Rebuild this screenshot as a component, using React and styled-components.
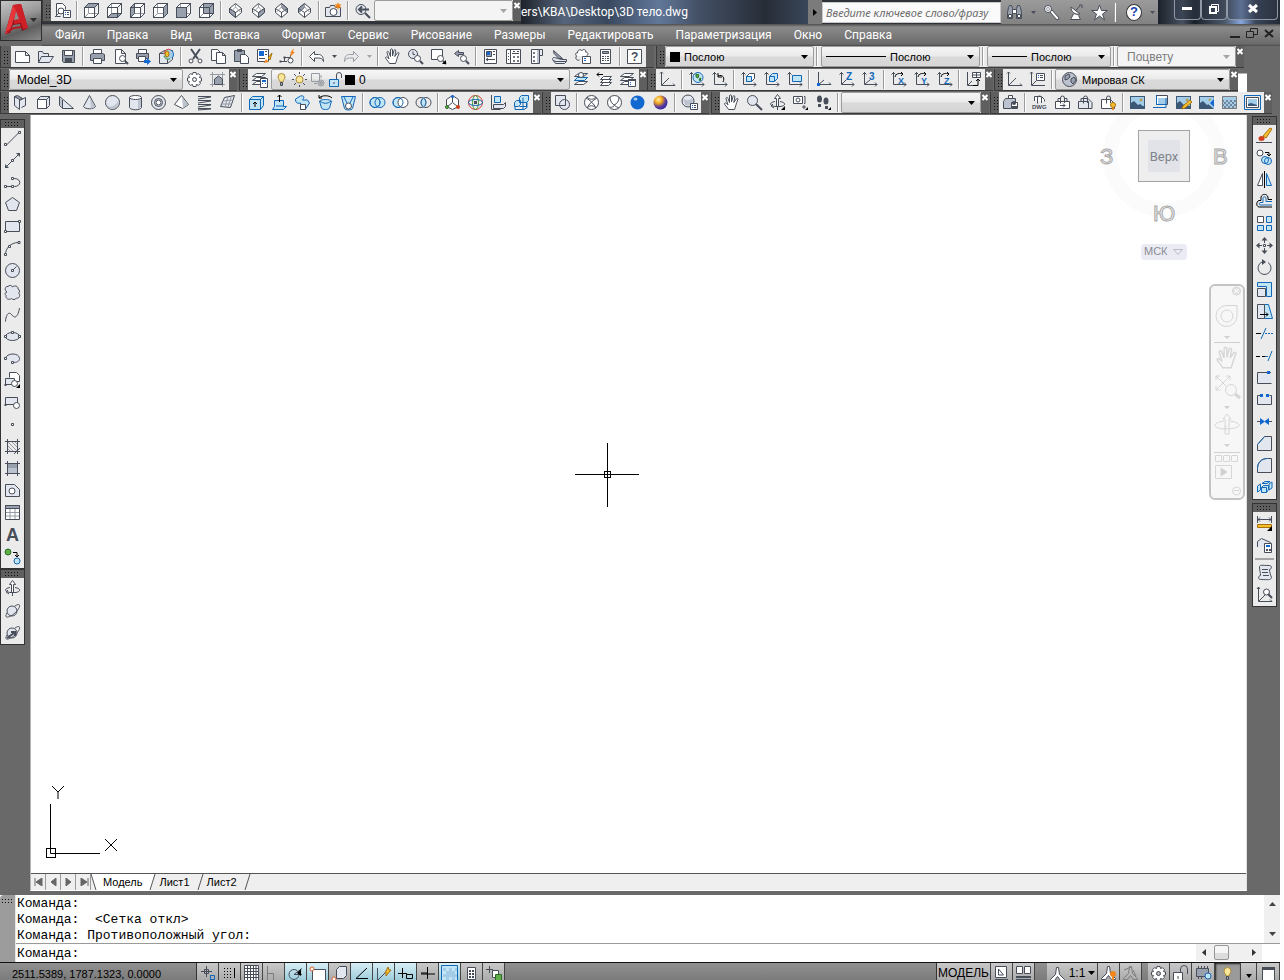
import React from 'react'
import styled, { createGlobalStyle, css } from 'styled-components'

const GlobalStyle = createGlobalStyle`
  * { box-sizing: border-box; }
  body {
    margin: 0;
    background: #fff;
    font-family: 'Liberation Sans', Arial, sans-serif;
    font-size: 12px;
  }
  button, select, input { font: inherit; }
`

/* ---------- icons ---------- */

const ink = '#474d59'
const blue = '#1268b8'

const tones = {
  k: { stroke: ink },
  K: { stroke: ink, strokeWidth: 2 },
  g: { stroke: ink, fill: '#e2e6ee' },
  w: { stroke: ink, fill: '#fff' },
  a: { stroke: ink, fill: '#98a0ae' },
  h: { fill: '#bcc3ce' },
  f: { fill: ink },
  x: { fill: '#000' },
  X: { stroke: '#000' },
  b: { stroke: blue },
  s: { stroke: blue, fill: '#c2e5f6' },
  n: { fill: '#1268d0' },
  l: { stroke: '#969ba3' },
  L: { fill: '#a0a4aa' },
  d: { stroke: '#7c7c7c' },
  o: { fill: '#f0861c' },
  O: { stroke: '#e0602a', fill: '#fff' },
  y: { stroke: '#a98a35', fill: '#fbe79a' },
  Y: { stroke: '#a8700c', fill: '#f6bf2c' },
  e: { fill: '#5fae4a', stroke: '#2b6d25' },
  E: { stroke: '#3f9a35' },
  r: { stroke: '#d03a34' },
  R: { fill: '#d0401e' },
  p: { fill: '#3d5877' },
  P: { fill: '#a3cce8' },
  q: { fill: '#71869b' },
}

const circle = (x, y, r) => `M${x - r} ${y}a${r} ${r} 0 1 0 ${2 * r} 0a${r} ${r} 0 1 0 ${-2 * r} 0z`
const ellipse = (x, y, rx, ry) => `M${x - rx} ${y}a${rx} ${ry} 0 1 0 ${2 * rx} 0a${rx} ${ry} 0 1 0 ${-2 * rx} 0z`
const box = (x, y, w, h) => `M${x} ${y}h${w}v${h}h${-w}z`
const dots = (...points) => points.map(([x, y]) => box(x - 1, y - 1, 2, 2)).join('')

const cube = shade => [
  ['w', `${box(1.5, 5.5, 10, 10)}M1.5 5.5l4-4h10l-4 4M15.5 1.5v10l-4 4`],
  ['l', 'M5.5 1.5v10h10M5.5 11.5l-4 4'],
  ['a', shade],
  ['k', `${box(1.5, 5.5, 10, 10)}M1.5 5.5l4-4h10l-4 4zM15.5 1.5v10l-4 4`],
]
const iso = shade => [
  ['w', 'M8.5 1.5l6 5v4l-6 5-6-5v-4z'],
  ['a', shade],
  ['k', 'M2.5 6.5l6 4 6-4M8.5 10.5v5'],
  ['l', 'M8.5 2v3l-5 5M8.5 5l5 5'],
]
const axes = ['k', 'M3.5 1v12.5H16M1.5 3.5l2-2 2 2M14 11.5l2 2-2 2']
const page = ['w', 'M3.5 1.5h6l4 4v10h-10zM9.5 1.5v4h4']
const lens = [['w', circle(10.5, 10.5, 3)], ['K', 'M13 13l3 3']]
const picture = [
  ['p', box(1, 2, 15, 13)],
  ['P', box(2, 3, 13, 9)],
  ['p', 'M2 14V9l3-2 4 4 2-1 4 3v1z'],
  ['y', circle(12, 6, 1)],
]
const layers = [['w', 'M5.5 2.5h9l-4 3h-9zM5.5 6.5h9l-4 3h-9zM5.5 10.5h9l-4 3h-9z']]
const clip = ['k', 'M6.5 9.5V4a2 2 0 0 1 4 0v5']
const gear = circle(8.5, 8.5, 2) + 'M7 1.5h3l.5 2 2-.8 2 2-1 1.8 2 .5v3l-2 .5 1 1.8-2 2-2-.8-.5 2h-3l-.5-2-2 .8-2-2 1-1.8-2-.5v-3l2-.5-1-1.8 2-2 2 .8z'
const hand = 'M5.5 15.5C4 12.5 1.5 11 1.5 9.5c1-1.5 2.5.5 3.5 1.5L3 4.5c0-1.5 1.5-1.5 2 0l1.5 4L6.5 2c0-1.5 2-1.5 2 0v6l1.5-5.5c.5-1.5 2-1 1.8.5L10.8 8.5l2.5-3.5c1-1.2 2.2-.2 1.5 1-2 4-2 6.5-3.3 9.5z'
const rotArrow = ['X', 'M5 6c1-4 5-4 8-3M11 1l2 2-2 2']
const anno = 'M7.5 1.5h2l1 7 5 5v1h-4l-3-4-3 4h-4v-1l5-5z'
const orbit = [
  ['w', 'M8.5 .5l3 4h-2v8h-2v-8h-2z'],
  ['k', 'M6 7.5c-6 1-6 4 0 5h6c5-1 5-4-1-5M4 10l-2 2 3 2M8.5 12v4'],
]
const orbitBall = [['g', circle(8, 9, 5)], ['k', 'M11 4c6-4 6 1 1 6s-13 8-9 1']]

const icons = {
  viewList: [['w', 'M2.5 14.5v-13h6l3 3v3M2.5 14.5h4'], ['k', circle(7, 9, 3) + 'M5 11l-4 4'], ['w', box(9.5, 8.5, 7, 7)], ['n', 'M11 10h1v1h-1zM11 12h1v1h-1z'], ['k', 'M13 10.5h2M13 12.5h2']],
  top: cube('M1.5 5.5l4-4h10l-4 4z'),
  bottom: cube('M1.5 15.5l4-4h10l-4 4z'),
  left: cube('M1.5 5.5l4-4v10l-4 4z'),
  right: cube('M15.5 1.5v10l-4 4v-10z'),
  front: cube(box(1.5, 5.5, 10, 10)),
  back: cube(box(5.5, 1.5, 10, 10)),
  isoSW: iso('M2.5 6.5l6 4v5l-6-5z'),
  isoSE: iso('M8.5 10.5l6-4v4l-6 5z'),
  isoNE: iso('M8.5 1.5l6 5v4l-6-5z'),
  isoNW: iso('M8.5 1.5v4l-6 5v-4z'),
  camera: [['g', 'M.5 5.5h4l1-2h4l1 2h5v9h-15z'], ['w', circle(8.5, 10, 3.5)], ['o', 'M13 0l1 2.5 2.5-.5-1.5 2 1.5 2-2.5-.5-1 2.5-1-2.5-2.5.5 1.5-2-1.5-2 2.5.5z']],
  prevView: [['g', circle(7, 7.5, 5)], ['K', 'M11 11l5 5M5 7.5h10M8 4.5l-3 3 3 3']],

  newFile: [['w', 'M1.5 3.5h10l4 4v7h-14zM11.5 3.5v4h4']],
  open: [['g', 'M1.5 14.5v-11h4l1 2h5v3M1.5 14.5l3-6h12l-4 6z']],
  save: [['a', 'M2.5 2.5h12v12h-11l-1-1z'], ['w', box(4.5, 2.5, 8, 5)], ['f', box(5, 10, 7, 4)]],
  print: [['w', box(4.5, 1.5, 8, 4)], ['a', 'M1.5 6.5l2-1h10l2 1v6h-14z'], ['w', box(4.5, 10.5, 8, 5)]],
  preview: [page, ...lens],
  publish: [['w', box(3.5, 1.5, 8, 4)], ['a', box(1.5, 5.5, 12, 5)], ['w', box(3.5, 8.5, 7, 5)], ['n', 'M9 12h3v-2l4 3.5-4 3.5v-2H9z']],
  dwf: [['g', 'M1.5 5.5l5-3h8v9l-5 4h-8zM1.5 5.5h8v10'], ['P', circle(10.5, 6.5, 5)], ['r', 'M6 6a4.5 4.5 0 0 1 7-4'], ['Y', ellipse(9, 6, 2, 3)], ['E', 'M6 8a5 5 0 0 0 6 3'], ['b', 'M13 2a5 5 0 0 1 1 8']],
  cut: [['K', 'M4 1l7 10M13 1L6 11'], ['w', circle(4, 13, 2) + circle(13, 13, 2)]],
  copy: [['w', 'M1.5 1.5h6l3 3v8h-9z'], ['w', 'M6.5 4.5h6l3 3v8h-9zM12.5 4.5v3h3']],
  paste: [['a', box(1.5, 2.5, 10, 11)], ['f', box(4, 1, 5, 3)], ['w', 'M7.5 6.5h5l3 3v6h-8z']],
  match: [['w', box(1.5, 1.5, 11, 12)], ['n', box(3, 3, 5, 5)], ['k', 'M9 3.5h2M9 6.5h2M3 10.5h6'], ['o', 'M8 15l2-4 3 3z'], ['Y', 'M12 10l4-5-2 7z']],
  blockEdit: [['k', 'M1 13.5h7M5.5 13V9.5h6V6.5'], ['w', circle(11.5, 12.5, 2.5)], ['o', 'M11 5l4-5-1 4h2l-5 5 1-4z'], ['f', dots([1.5, 13.5], [5.5, 9.5])]],
  undo: [['w', 'M1.5 8.5l5-5v3h4c3 0 5 2 5 7-1-3-3-3.5-5-3.5h-4v3.5z']],
  redo: [['l', 'M15.5 8.5l-5-5v3h-4c-3 0-5 2-5 7 1-3 3-3.5 5-3.5h4v3.5z']],
  arrow: [['f', 'M6 7h5l-2.5 3z']],
  arrowOff: [['L', 'M6 7h5l-2.5 3z']],
  pan: [['w', hand]],
  zoomRT: [['g', circle(6, 6, 4.5)], ['k', 'M6 3.5v3h2'], ...lens],
  zoomWin: [['w', box(1.5, 1.5, 11, 10)], ...lens, ['x', 'M16 12v4h-4z']],
  zoomPrev: [['a', 'M1.5 5.5l4-3v2h5v2h-5v2z'], ...lens],
  props: [['w', box(2.5, 1.5, 12, 14)], ['a', box(4.5, 3.5, 5, 5)], ['n', box(5, 4, 3, 3)], ['k', 'M11 3.5h2M11 6.5h2M4 11.5h9M6 10l-2 1.5 2 1.5']],
  design: [['w', box(1.5, 1.5, 14, 14)], ['k', 'M5.5 1.5v14M3 5.5h1M3 8.5h1M3 11.5h1M8.5 8.5h1v1h-1zM12.5 8.5h1v1h-1zM8.5 12.5h1v1h-1zM12.5 12.5h1v1h-1zM12 3.5h2M8 3.5h2M7 5.5h7']],
  palettes: [['w', box(3.5, 1.5, 8, 14)], ['h', 'M9 2h2v13H9z'], ['k', 'M11.5 1.5h3v6h-3M5.5 4.5h1v1h-1zM5.5 8.5h1v1h-1zM5.5 12.5h1v1h-1z']],
  sheets: [['g', 'M1.5 11.5c0-2 1-2 2-2l7 2h5v2l-2 2h-9z'], ['a', 'M2.5 2.5l9 8H8l-5-5z'], ['k', 'M2 12.5l3 1h10']],
  markup: [['w', 'M2.5 8c-2-2 0-4 1-3 0-4 4-4 4-2 2-3 5-1 4 1 3 0 3 3 1 4'], ['k', 'M2.5 8c-2 3 1 5 3 4'], ['w', box(8.5, 8.5, 8, 7)], ['n', 'M10 10h2v1h-2zM10 12h2v1h-2z']],
  calc: [['w', box(3.5, 1.5, 10, 14)], ['a', box(5.5, 3.5, 6, 2)], ['f', 'M5 8h2v1H5zM8 8h1v1H8zM10 8h2v1h-2zM5 10h2v1H5zM8 10h1v1H8zM10 10h2v1h-2zM5 12h2v1H5zM8 12h1v1H8zM10 12h2v1h-2z']],
  help: [['w', box(1.5, 1.5, 14, 14)], ['t', '?', 5, 13, 12, ink]],

  gear: [['w', gear]],
  workspaceSave: [['l', 'M3.5 1v15M13.5 1v15M1 3.5h15M1 13.5h15'], ['a', 'M5.5 13.5V8l4-3 4 3v5.5z']],
  layerProps: [...layers, ['w', box(9.5, 7.5, 7, 9)], ['n', 'M11 9h4v2h-4zM11 12h1v1h-1zM14 12h1v1h-1z']],
  layerCurrent: [...layers, ['s', 'M4.5 6.5h10l-3 3h-10z'], ['w', circle(8, 4, 2.5)]],
  layerPrev: [['w', 'M7.5 5.5h8l-3 3h-8zM7.5 8.5h8l-3 3h-8zM7.5 11.5h8l-3 3h-8z'], ['X', 'M1 3.5h6M3 1.5l-2 2 2 2']],
  layerState: [...layers, ['w', box(9.5, 8.5, 7, 7)], ['f', box(9, 8, 8, 2)], ['n', 'M11 11h1v1h-1zM11 13h1v1h-1z']],
  bulb: [['y', 'M5 6a3.5 3.5 0 0 1 7 0c0 2-2 3-2 5H7c0-2-2-3-2-5z'], ['a', box(7.5, 11.5, 2, 3)]],
  sun: [['y', circle(8.5, 8.5, 3.5)], ['k', 'M8.5 1v2M8.5 14v2M1 8.5h2M14 8.5h2M3 3l2 2M12 12l2 2M14 3l-2 2M5 12l-2 2']],
  vpFreeze: [['l', box(2.5, 2.5, 8, 8) + 'M12 4v3M5 12.5h3'], ['l', circle(12, 12, 3)], ['L', circle(12, 12, 2)]],
  unlock: [['s', box(2.5, 8.5, 9, 7)], ['k', 'M9.5 8V4a2.5 2.5 0 0 1 5 0v3M7 11v2']],

  polysolid: [['g', 'M2.5 2.5l5 2v11l-5-4zM7.5 6.5l6-3v8l-4 2'], ['a', 'M2.5 2.5l3-1 5 3-3 1z']],
  boxSolid: [['g', 'M2.5 5.5l3-3h9v9l-3 3h-9z'], ['w', 'M2.5 5.5h9v9h-9z'], ['k', 'M11.5 5.5l3-3']],
  wedge: [['g', 'M1.5 2.5l14 12h-11l-3-3z'], ['h', 'M2 4v7l2 3V6z'], ['k', 'M4.5 14V6']],
  cone: [['g', 'M8.5 1.5l6 11c-1 3-11 3-12 0z'], ['h', 'M9 4l5 8.5c-1 1-2 2-4 2z']],
  sphere: [['g', circle(8.5, 8.5, 7)], ['h', 'M3 11c3 3 8 2 11-4 1 8-8 11-11 4z']],
  cylinder: [['g', 'M2.5 3.5v10c1 3 11 3 12 0v-10'], ['h', 'M11 6l3-1v8l-3 2z'], ['w', ellipse(8.5, 3.5, 6, 2)]],
  torus: [['g', circle(8.5, 8.5, 7)], ['k', circle(8.5, 8.5, 4)], ['w', circle(8.5, 8.5, 2.5)]],
  pyramid: [['w', 'M8.5 1.5l7 9-6 4-8-4z'], ['h', 'M9 3l1 11 5-3.5z']],
  helix: [['k', 'M2 2.5h13M2 5l13-2M2 6.5h13M2 9l13-2M2 10.5h13M2 13l13-2M2 14.5h13M2 16l13-1']],
  planar: [['g', 'M5.5 3.5l10-2-4 12-10-1z'], ['l', 'M9 3L6 13M12.5 2L9 13M4 7l10-1M2.5 10h10']],
  extrude: [['s', 'M1.5 5.5l3-3h11v9l-3 4h-11z'], ['b', 'M1.5 5.5h11v10M12.5 5.5l3-3'], ['X', 'M7 13V8M5 10l2-2 2 2']],
  presspull: [['s', 'M3.5 6.5h9v6h3l-3 3h-11l2-3z'], ['b', 'M5 12h8'], ['X', 'M8.5 8V1M6.5 3l2-2 2 2']],
  sweep: [['s', 'M1.5 5l5-3c4-1 4 2 2 4h5l2 3-4 6h-5v-6c-4 1-5-1-5-4z'], ['w', box(6.5, 10.5, 5, 5)]],
  revolve: [['s', 'M2.5 7c2-2 10-2 12 0l-2 7c-1 2-7 2-8 0z'], ['b', 'M3 7c3 3 8 3 11 0'], ['X', 'M2 4c3-3 10-3 13 0M2 1v3h3']],
  loft: [['s', 'M1.5 2.5h14l-3 12c-1 2-7 2-8 0z'], ['w', circle(8.5, 12, 3)], ['b', 'M4 3l3 6M13 3l-3 6']],
  union: [['s', circle(6, 8.5, 5) + circle(11, 8.5, 5)], ['b', circle(6, 8.5, 5)]],
  subtract: [['s', circle(6, 8.5, 5)], ['w', circle(11, 8.5, 5)], ['b', circle(6, 8.5, 5)]],
  intersect: [['k', circle(6, 8.5, 5) + circle(11, 8.5, 5)], ['s', 'M8.5 4c3 2 3 7 0 9-3-2-3-7 0-9z']],
  gizmo3d: [['w', 'M8.5 1.5l6 4v7l-6 3-6-3v-7z'], ['k', 'M8.5 2v6M8.5 8.5l-5 4M8.5 8.5l5 4'], ['n', circle(8.5, 2.5, 1.5)], ['e', circle(3, 13, 1.5)], ['R', circle(14, 13, 2)]],
  gizmoRot: [['r', circle(8.5, 8.5, 7)], ['E', ellipse(8.5, 8.5, 3, 7)], ['b', ellipse(8.5, 8.5, 7, 3)], ['f', box(7, 7, 3, 3)]],
  alignUcs: [['s', box(4.5, 2.5, 6, 6)], ['k', 'M1.5 1v14.5h9'], ['g', 'M3.5 10.5h10l2-2v4l-2 2h-10z']],
  array3d: [['s', 'M1.5 8.5l2-2h4v4l-2 2h-4zM6.5 3.5l2-2h7v5l-2 2h-7z'], ['b', 'M2 12v3.5h9l3-2v-5M6.5 8.5h7v5M10 3.5v12M6.5 12.5h7']],

  wire2d: [['g', box(1.5, 1.5, 10, 10)], ['g', circle(10.5, 10.5, 5)], ['k', 'M11.5 6v5.5H6']],
  wire3d: [['w', circle(8.5, 8.5, 7)], ['k', 'M3 4c4 2 8 6 10 10M14 4c-4 2-8 6-10 10M4 3c3 3 6 3 9 0M4 14c3-3 6-3 9 0']],
  hidden: [['w', circle(8.5, 8.5, 7)], ['k', 'M4 3c0 4 2 8 9 11M13 3c0 4-2 7-5 8M4 13c1 1 2 0 4-1']],
  realistic: [['n', circle(8.5, 8.5, 7)], ['P', ellipse(6.5, 5, 2, 1.5)]],
  styleManager: [['g', circle(7, 7, 6)], ['h', 'M2 4c3 3 6 3 9 0 3 5-2 9-7 7z'], ['w', box(9.5, 9.5, 7, 6)], ['n', 'M11 11h1v1h-1zM11 13h1v1h-1z'], ['k', 'M13 11.5h2M13 13.5h2']],
  zoom: [['K', 'M10 10l6 6'], ['g', circle(6.5, 6.5, 5)]],
  orbit,
  orbitMenu: [...orbit, ['x', 'M16 12v4h-4z']],
  cameraMove: [['w', box(1.5, 2.5, 9, 7)], ['k', circle(6, 6, 2) + 'M12 2.5h1v7h-1M12 11v4M10 13h4'], ['x', 'M16 13v3h-3z']],
  walk: [['f', ellipse(4.5, 5, 2.5, 3.5) + box(3, 10, 3, 3) + ellipse(11, 7, 2.5, 3.5) + box(10, 12, 3, 3)], ['x', 'M16 13v3h-3z']],

  ucs: [['k', 'M2.5 1v13.5H16M3 14l7-7M14 12.5l2 2M1 2.5l1.5-1.5 1.5 1.5']],
  ucsWorld: [axes, ['s', circle(10, 6.5, 5)], ['e', 'M8 3l3 1-1 3-2-1zM11 8l2-1-1 3z']],
  ucsPrev: [axes, ['X', 'M7 5c5-2 7 2 5 6M7 2v4h4']],
  ucsFace: [axes, ['w', 'M6.5 5.5l3-3h5v5l-3 3h-5z'], ['s', box(6.5, 5.5, 5, 5)]],
  ucsObject: [axes, ['s', 'M6.5 5.5l3-3h5v5l-3 3h-5z'], ['b', 'M6.5 5.5h5v5']],
  ucsView: [axes, ['s', box(6.5, 4.5, 9, 6)]],
  ucsOrigin: [['k', 'M3.5 1v12.5H16M3 14l6-5M14 11.5l2 2'], ['n', box(2, 12, 3, 3)]],
  ucsZ: [axes, ['k', 'M4 13l4-4'], ['t', 'Z', 8, 9, 10, blue]],
  ucs3: [axes, ['k', 'M4 13l5-4'], ['t', '3', 8, 9, 10, blue]],
  rotX: [axes, rotArrow, ['t', 'X', 8, 13, 9, blue]],
  rotY: [axes, rotArrow, ['t', 'Y', 8, 13, 9, blue]],
  rotZ: [axes, rotArrow, ['t', 'Z', 8, 13, 9, blue]],
  ucsApply: [['k', 'M2.5 1v13.5H8M3 14l4-4'], ['w', box(7.5, 1.5, 8, 5)], ['k', 'M11.5 1.5v5M7.5 4h8'], ['X', 'M8 14.5h5V8M11 10l2-2 2 2']],
  ucsNamed: [['k', 'M2.5 1v13.5H16M3 14l4-4M1 2.5l1.5-1.5 1.5 1.5'], ['w', box(7.5, 2.5, 8, 7)], ['n', 'M9 4h1v1H9zM9 6h1v1H9z'], ['k', 'M11 4.5h3M11 6.5h3']],
  globe: [['h', circle(8.5, 8.5, 7)], ['a', 'M4 5l4-2 1 3-2 2-3 1zM10 8l3-2 2 3-3 4-2-2z'], ['k', circle(8.5, 8.5, 7)]],

  attach: [['h', 'M2 7l2-2h9v5H9v5H2z'], ['k', 'M9 14.5h-7.5v-7l2-3h10v4'], ['w', box(6.5, 1.5, 4, 3)], ['w', box(9.5, 8.5, 6, 6)], ['f', circle(12, 9, 2) + box(10, 12, 5, 3)]],
  dwg: [['w', 'M3.5 7V2.5h7l3 3v2'], clip, ['t', 'DWG', 1, 15, 6, ink]],
  xclip: [['w', box(1.5, 7.5, 14, 7)], ['k', 'M4 7V4.5h2M11 4.5h2V7'], clip, ['k', 'M6 11.5h5M9 9.5l2 2-2 2']],
  underlay: [['g', 'M1.5 14.5v-7h10v7zM4 7V4.5h7l4 4v6h-4'], clip],
  snapLay: [['w', 'M1.5 14.5v-9h9l4 4v5z'], clip, ['Y', circle(13, 11, 2.5)], ['o', box(12, 14, 2, 2)]],
  picAttach: picture,
  picClip: [['w', box(4.5, 1.5, 11, 9)], ['P', box(6, 4, 9, 6)], ['b', 'M4.5 1v9.5H14M1 13.5h13V4']],
  picAdjust: [...picture, ['Y', 'M7 15l1-3 7-6 2 2-7 6z']],
  picQuality: [...picture, ['P', 'M9 9l7-6v12z'], ['n', 'M12 9l4-4v8z']],
  picTransp: [['P', box(1, 2, 15, 13)], ['q', 'M1 6h2v2H1zM5 6h2v2H5zM9 6h2v2H9zM13 6h2v2h-2zM3 8h2v2H3zM7 8h2v2H7zM11 8h2v2h-2zM1 10h2v2H1zM5 10h2v2H5zM9 10h2v2H9zM13 10h2v2h-2zM3 12h2v2H3zM7 12h2v2H7zM11 12h2v2h-2z'], ['d', box(1.5, 2.5, 14, 12)]],
  picFrame: [['b', box(.5, 1.5, 16, 14)], ['w', box(2.5, 3.5, 12, 10)], ['P', box(4, 5, 9, 7)], ['p', 'M4 12v-2l3-1 6 2v1z']],

  line: [['k', 'M2.5 15l12-12'], ['w', box(.5, 13.5, 2, 2) + box(14.5, 1.5, 2, 2)]],
  xline: [['k', 'M2 15L15 2'], ['f', 'M1 16v-4l4 4zM16 1v4l-4-4z'], ['w', box(7.5, 7.5, 2, 2)]],
  pline: [['k', 'M1.5 12.5h9c7 0 7-8 0-8h-1'], ['w', dots([1.5, 12.5], [8.5, 12.5], [8.5, 4.5])]],
  polygon: [['g', 'M8.5 1.5l7 5-3 8h-8l-3-8z']],
  rect: [['g', box(1.5, 3.5, 14, 10)], ['w', dots([1.5, 13.5], [15.5, 3.5])]],
  arc: [['k', 'M1.5 14.5c0-6 5-12 13-12'], ['w', dots([1.5, 14.5], [5.5, 6.5], [15, 2.5])]],
  circle: [['g', circle(8.5, 8.5, 7)], ['k', 'M8.5 8.5l4-4'], ['w', dots([8.5, 8.5])]],
  cloud: [['g', 'M3 8C0 6 1 2 4 2.5 5 1 8 1 8.500 3c2-2 6-1 5.500 2 2 1 2 3 .5 4 2.500 2 .5 6-2 5-1 2-4 2-5 .5-3 2-6 0-5.500-3C.5 11 1 8 3 8z']],
  spline: [['k', 'M1.5 15.5C2 8 5 5 8 9s6 2 7.5-7']],
  ellipse: [['g', ellipse(8.5, 8.5, 7, 4)], ['w', dots([1.5, 8.5], [15.5, 8.5], [8.5, 4.5])]],
  ellArc: [['g', 'M1.5 8.5c1-6 14-6 14 0 0 3-3 4-6 4'], ['w', dots([1.5, 8.5], [8.5, 12.5])]],
  insert: [['w', 'M5.5 5.5v-5h7l3 3v6h-3'], ['g', box(1.5, 6.5, 9, 6)], ['w', circle(10.5, 11.5, 3)], ['f', dots([1.5, 13])], ['x', 'M16 12v4h-4z']],
  block: [['g', box(1.5, 3.5, 12, 7)], ['w', circle(12.5, 11.5, 3)], ['f', dots([1.5, 11])]],
  point: [['w', box(7.5, 7.5, 2, 2)]],
  hatch: [['k', 'M3.5 1v15M13.5 1v15M1 3.5h15M1 13.5h15'], ['l', 'M4 8l5 5M4 4l9 9M8 4l5 5M4 11l2 2M11 4l2 2'], ['k', 'M10 16l6-6']],
  gradient: [['a', box(3.5, 3.5, 10, 10)], ['h', box(4, 8, 9, 5)], ['k', 'M3.5 1v15M13.5 1v15M1 3.5h15M1 13.5h15']],
  region: [['g', 'M1.5 14.5v-12h9l5 5v7z'], ['w', circle(8, 9, 3)]],
  table: [['w', box(1.5, 1.5, 14, 14)], ['a', box(1.5, 1.5, 14, 3)], ['l', 'M6 5v10M11 5v10M2 8.5h13M2 12h13']],
  text: [['t', 'A', 2, 15, 18, ink]],
  addSel: [['e', circle(4, 4, 3)], ['s', circle(13, 13, 3)], ['X', 'M9 4.5h4v4M11 7l2 2 2-2']],
  freeOrbit: orbitBall,
  contOrbit: [...orbitBall, ['K', 'M3 14l7-5M7 8h4v4']],

  erase: [['Y', 'M7 9l7-8 2 1-6 9z'], ['R', ellipse(5.5, 11.5, 3, 2.5)], ['k', 'M0 15.5h16']],
  copyObj: [['w', circle(4, 4, 3)], ['s', circle(9, 11, 3.5) + circle(12, 12, 3.5)], ['X', 'M9 3.5h4v3M11 5l2 2 2-2']],
  mirror: [['w', 'M6.5 2.5v12h-5z'], ['s', 'M10.5 2.5v12h5z'], ['X', 'M8.5 0v17']],
  offset: [['X', 'M16 6.5h-4V4c-1-3.5-6-3.5-7 0v3.5H3c-3 1-3 6 0 6.5h13'], ['b', 'M16 8.5h-6v-4c-1-1-2-1-3 0v5H4c-1 1-1 2 0 2.500h12']],
  array: [['w', box(1.5, 1.5, 6, 6)], ['s', box(10.5, 1.5, 5, 6) + box(1.5, 10.5, 6, 5) + box(10.5, 10.5, 5, 5)]],
  move: [['k', 'M8.5 1v5M8.5 11v5M1 8.5h5M11 8.5h5'], ['w', box(7.5, 7.5, 2, 2)], ['f', 'M8.5 0l3 3.5h-6zM8.5 17l3-3.5h-6zM0 8.5l3.5-3v6zM17 8.5l-3.5-3v6z']],
  rotate: [['k', 'M6 3a6.5 6.5 0 1 0 6 .5'], ['f', 'M6 0l4 3-4 3z']],
  scale: [['s', 'M1.5 5.5v-4h14v14h-5v-10z'], ['g', box(1.5, 7.5, 8, 8)]],
  stretch: [['s', 'M8.5 1.5h4l4 14h-8z'], ['g', 'M1.5 1.5h7v14h-7z'], ['X', 'M4 11.5h8M10 9.5l2 2-2 2']],
  trim: [['b', 'M5 14L10 3M9 8.5h2M12 8.5h2M15 8.5h2'], ['X', 'M0 8.5h5']],
  extend: [['X', 'M0 9.5h4M6 9.5h3'], ['b', 'M9 9.5h3M12 14l4-10']],
  breakPt: [['g', 'M15 3.5h-13.5v11h14'], ['n', box(11, 2, 3, 3)]],
  breakTwo: [['g', 'M4 4.5h-2.5v9h14v-9h-2'], ['n', box(4, 3, 3, 3) + box(10, 3, 3, 3)]],
  join: [['k', 'M1 8.5h5M11 8.5h5'], ['n', 'M4 5l5 3.5L4 12zM13 5L8 8.5l5 3.5z']],
  chamfer: [['g', 'M1.5 9.5l7-8h7v14h-14z'], ['b', 'M1.5 9.5l7-8']],
  fillet: [['g', 'M1.5 11.5c0-6 4-10 10-10h4v14h-14z'], ['b', 'M1.5 11.5c0-6 4-10 10-10']],
  explode: [['s', 'M5.5 8.5l2-2h5v4l-2 3h-5zM1.5 7l3-2v6l-3 2zM13 5l3-2v6l-3 2zM6 4.5l3-2h5l-3 2z'], ['b', 'M5.5 8.5h5v5']],
  measure: [['k', 'M1.5 2v7M15.5 2v7M2 5.5h13M4 3.5l-2 2 2 2M13 3.5l2 2-2 2'], ['Y', box(1.5, 10.5, 14, 3)], ['x', 'M16 12v5h-5z']],
  areaCalc: [['g', 'M1.5 11V5.5l4-3 9 4v3'], ['w', box(8.5, 7.5, 7, 9)], ['n', box(10, 9, 4, 2)], ['f', dots([11, 14], [14, 14])]],
  list: [['g', 'M3.5 2.5c1-2 2-1 10-1 3 0 2 4 0 4 0 3 1 5 2 8-1 3-3 2-11 2-3 0-2-4 0-4 0-3-1-5-1-9z'], ['k', 'M6 5.5h6M6 8.5h6M7 11.5h6']],
  locate: [['k', 'M2.5 1v14.5H16M1 3l1.5-2L4 3M14 13.5l2 2M3 15l6-6'], ['w', circle(10.5, 6, 3)], ['K', 'M12 8l4 4']],

  stSnap: [['k', 'M7.5 1v11M2 6.5h11M5.5 4.5h4v4h-4z'], ['b', 'M11.5 10.5h4v4h-4M11.5 10v7']],
  stGridDots: [['x', [3, 6, 9, 12].map(y => [3, 6, 9].map(x => box(x, y, 1, 1)).join('')).join('')], ['X', 'M13.5 3v10']],
  stGrid: [['w', box(1.5, .5, 14, 16)], ['k', 'M4.5 1v16M7.5 1v16M10.5 1v16M13 1v16M2 3.5h13M2 6.5h13M2 9.5h13M2 12.5h13M2 15.5h13']],
  stOrtho: [['d', 'M2.5 1v16M2.5 8.5h6v8']],
  stPolar: [['k', circle(7, 9.5, 5) + 'M7 9.5h8M7 9.5l8-6'], ['x', 'M14 4v7l-4-3z']],
  stOsnap: [['w', box(3.5, 4.5, 13, 13)], ['O', circle(3, 4, 2)]],
  stOsnap3d: [['g', 'M5.5 4.5l3-3h7v9l-3 3h-7z'], ['O', circle(3, 14, 2)]],
  stTrack: [['X', 'M14 3L3 13.5h12']],
  stDucs: [['k', 'M2.5 3v13.5M2 16L10 8'], ['Y', 'M10 8l3-6 1 3h2l-5 6v-4z']],
  stDyn: [['X', 'M5.5 3v10M1 8.5h9M9.5 9.5h6v4h-6z']],
  stLwt: [['X', 'M8.5 2v12M2 9h14M2 8h6']],
  stTransp: [['s', box(.5, .5, 16, 17)], ['P', 'M2 3h3v3h3V3h3v3h3V3h2v3h-2v3h2v3h-2v3h-3v-3H8v3H5v-3H2V9h3V6H2z']],
  stQuick: [['w', box(4.5, 2.5, 8, 12)], ['f', dots([7, 6], [10, 6], [7, 9], [10, 9], [7, 12], [10, 12])]],
  stSelect: [['k', 'M4.5 1v7M1 4.5h7'], ['w', box(7.5, 5.5, 6, 7)], ['e', box(10.5, 9.5, 6, 7)]],
  stModel: [['w', box(2.5, 1.5, 11, 11)], ['k', 'M5.5 4v6h5z'], ['K', 'M2 15h13']],
  stLayouts: [['w', box(1.5, 1.5, 6, 7) + box(9.5, 1.5, 6, 7)], ['K', 'M1 12h15M1 15h15']],
  stAnno: [['w', anno]],
  stAnnoVis: [['w', anno], ['o', circle(13, 9, 3) + box(12, 12, 2, 4)]],
  stAnnoAuto: [['d', anno], ['d', 'M2 5l7-3M11 5l3 6']],
  stLock: [['w', box(1.5, 7.5, 9, 9)], ['k', 'M8.5 7V4a3.5 3.5 0 0 1 7 0v5M6 11v3']],
  stHard: [['a', box(1.5, 3.5, 12, 8)], ['k', 'M3.5 1v2M6.5 1v2M9.5 1v2M12.5 1v2M3.5 12v2M6.5 12v2'], ['s', circle(13, 11, 3)]],
  stClean: [['w', box(2.5, 2.5, 12, 14)], ['f', box(2, 2, 13, 3)]],

  binoculars: [['a', 'M2.5 3.5l1-2h2l1 3v10h-5v-6zM10.5 4.5l1-3h2l1 2 1 5v6h-5z'], ['w', box(6.5, 5.5, 4, 4) + box(2.5, 10.5, 3, 3) + box(11.5, 10.5, 3, 3)]],
  key: [['w', 'M7 8l2-2 7 8-1 2-2-1z'], ['w', circle(5, 5, 3.5)], ['l', circle(5, 5, 1.5)]],
  satellite: [['w', 'M4 3c0 5 4 8 9 7zM6.5 10l-3 5.5h10l-2-4'], ['k', 'M9 6l4-4M12 1h3v3']],
  star: [['w', 'M8.5 1l2 5.5h6l-5 3.5 2 6-5-4-5 4 2-6-5-3.5h6z']],
}

const Svg = styled.svg`
  display: block;
  flex: none;
  width: 17px;
  height: 17px;
  overflow: visible;
  fill: none;
`

const ShadedBall = () => (
  <Svg viewBox="0 0 17 17" aria-hidden="true">
    <radialGradient id="warm" cx="0.35" cy="0.3" r="0.75">
      <stop offset="0" stopColor="#fff0a0" />
      <stop offset="0.35" stopColor="#f2a51e" />
      <stop offset="0.7" stopColor="#5b3a9c" />
      <stop offset="1" stopColor="#3026a8" />
    </radialGradient>
    <circle cx="8.5" cy="8.5" r="7" fill="url(#warm)" />
  </Svg>
)

const Icon = ({ name }) => {
  if (name === 'conceptual') return <ShadedBall />
  return (
    <Svg viewBox="0 0 17 17" aria-hidden="true">
      {icons[name].map(([tone, d, x, y, size, color], i) => tone === 't'
        ? <text key={i} x={x} y={y} fontSize={size} fontWeight="bold" fill={color}>{d}</text>
        : <path key={i} d={d} {...tones[tone]} />)}
    </Svg>
  )
}

/* ---------- toolbars ---------- */

const dotPattern = css`
  background-image: radial-gradient(#111 1px, transparent 1px);
  background-size: 3px 3px;
`

const Toolbar = styled.div`
  display: flex;
  flex: none;
  height: 22px;
  background: #ebebeb;
  border-bottom: 1px solid #3a3a3a;
  margin-right: ${props => props.$gap || 0}px;
`
const Grip = styled.span`
  flex: none;
  width: ${props => props.$size || 9}px;
  background: #5f5f5f;
  border-left: 1px solid #3a3a3a;
  padding: 4px 2px;
  &::after {
    content: '';
    display: block;
    width: 6px;
    height: 14px;
    ${dotPattern}
  }
`
const EndCap = styled.span`
  flex: none;
  width: 8px;
  background: #5f5f5f;
`
const ToolButton = styled.button`
  flex: none;
  display: flex;
  justify-content: center;
  align-items: center;
  width: ${props => props.$narrow ? 12 : 23}px;
  height: 21px;
  padding: 0;
  border: 0;
  background: none;
`
const Divider = styled.span`
  flex: none;
  width: ${props => props.$wide ? 7 : 6}px;
  height: 19px;
  margin: 1px 0;
  background: linear-gradient(90deg, transparent 2px, #9a9a9a 2px, #9a9a9a 3px, #fff 3px, #fff 4px, transparent 4px);
`
const CloseStrip = styled.button`
  flex: none;
  width: 8px;
  padding: 2px 0 0 1px;
  border: 0;
  background: #5f5f5f;
  display: flex;
  align-items: flex-start;
`
const Close = () => (
  <CloseStrip aria-label="Закрыть">
    <svg width="6" height="7" viewBox="0 0 6 7"><path d="M.5 1l5 5M5.5 1l-5 5" stroke="#fff" strokeWidth="2" /></svg>
  </CloseStrip>
)

const Tools = ({ names }) => names.split(' ').map((name, i) => name === '|'
  ? <Divider key={i} />
  : (
    <ToolButton key={i} $narrow={name.startsWith('arrow')} aria-label={name}>
      <Icon name={name} />
    </ToolButton>
  ))

const ComboBox = styled.div`
  flex: none;
  display: flex;
  align-items: center;
  gap: 1px;
  width: ${props => props.$width}px;
  height: 21px;
  padding: 0 5px 0 ${props => props.$lead || 4}px;
  border: 1px solid #9c9c9c;
  border-radius: 2px;
  background: ${props => props.$off ? '#f4f4f4' : 'linear-gradient(#f6f6f6, #eaeaea 48%, #dadada 52%, #d6d6d6)'};
`
const Select = styled.select`
  flex: 1;
  min-width: 0;
  height: 18px;
  padding: 0 0 0 3px;
  border: 0;
  appearance: none;
  background: transparent;
  color: ${props => props.$off ? '#7d7d7d' : '#000'};
  font-size: ${props => props.$small ? 11 : 12}px;
`
const Swatch = styled.span`
  width: 10px;
  height: 10px;
  background: #000;
`
const LineSample = styled.span`
  width: ${props => props.$width}px;
  height: 1px;
  background: #000;
`

const Combo = ({ label, value, width, lead, off, small, children }) => (
  <ComboBox $width={width} $lead={lead} $off={off}>
    {children}
    <Select aria-label={label} $off={off} $small={small} defaultValue={value}>
      <option value={value}>{value}</option>
    </Select>
    <svg width="7" height="4" viewBox="0 0 7 4"><path d="M0 0h7L3.5 4z" fill={off ? '#a5a5a5' : '#000'} /></svg>
  </ComboBox>
)

const Row = styled.div`
  display: flex;
  flex: none;
  height: 23px;
  background: #696969;
`
const RowTail = styled.span`
  width: 9px;
  margin-top: 4px;
  border-top: 1px solid #b4b4b4;
  background: #fff;
`

/* ---------- header ---------- */

const Header = styled.header`
  display: flex;
  flex: none;
  height: 46px;
  background: #6b6b6b;
`
const AppButton = styled.button`
  flex: none;
  width: 42px;
  height: 41px;
  padding: 0;
  border: 1px solid #2d2d2d;
  background: linear-gradient(160deg, #c4c4c4, #9a9a9a 40%, #5e5e5e 70%, #8a8a8a);
`
const HeaderMain = styled.div`
  flex: 1;
  min-width: 0;
`
const TitleBar = styled.div`
  display: flex;
  height: 24px;
  background: #30343a;
`
const Title = styled.h1`
  flex: 1;
  min-width: 0;
  overflow: hidden;
  margin: 0;
  color: #fff;
  font: 12px/25px Roboto, 'Open Sans', sans-serif;
  white-space: nowrap;
  background: linear-gradient(90deg, #1d222b, #56657b 15%, #39485f 30%, #62789a 48%, #435065 62%, #272d37 85%, #39465a);
`
const SearchToggle = styled.button`
  width: 14px;
  padding: 0;
  border: 0;
  background: #7b7b7b;
`
const Search = styled.input`
  width: 179px;
  height: 21px;
  margin-top: 2px;
  padding: 2px 3px;
  border: 1px solid #c8c8c8;
  background: #fafafa;
  font: italic 11px 'Noto Sans', 'Open Sans', sans-serif;
  &::placeholder { color: #6c6c6c; opacity: 1; }
`
const InfoTools = styled.div`
  display: flex;
  align-items: center;
  gap: 1px;
  width: 157px;
  padding-left: 2px;
  background: linear-gradient(#9b9b9b, #828282);
`
const HelpMark = styled.button`
  width: 17px;
  height: 17px;
  margin: 0 3px 0 7px;
  padding: 0;
  border: 1px solid #333;
  border-radius: 50%;
  background: #fff;
  color: #1a3fb0;
  font-weight: bold;
  font-size: 13px;
  line-height: 14px;
`
const WindowZone = styled.div`
  display: flex;
  width: 122px;
  padding: 0 2px 4px 16px;
  background: linear-gradient(90deg, #1c222b, #465160 20%, #1a2029 30%, #4d5a6b 55%, #86a6dc 68%, #3b475b 80%, #242b36);
`
const WindowButton = styled.button`
  flex: ${props => props.$grow || 1};
  display: flex;
  justify-content: center;
  align-items: center;
  padding: 0 0 2px;
  border: 1px solid #8f98a6;
  border-top: 0;
  border-radius: 0 0 4px 4px;
  background: rgba(50, 58, 74, 0.5);
`
const MenuBar = styled.nav`
  display: flex;
  align-items: center;
  gap: 22px;
  height: 22px;
  padding: 0 4px 0 13px;
  background: linear-gradient(#4c4c4c, #8a8a8a 3px, #6b6b6b 20px, #4a4a4a);
`
const MenuLink = styled.a`
  color: #fff;
  font: 12px/20px Roboto, 'Open Sans', sans-serif;
  text-decoration: none;
`
const DocButtons = styled.div`
  display: flex;
  gap: 3px;
  margin-left: auto;
`
const DocButton = styled.button`
  width: 14px;
  padding: 0;
  border: 0;
  background: none;
`

const menu = ['Файл', 'Правка', 'Вид', 'Вставка', 'Формат', 'Сервис', 'Рисование', 'Размеры', 'Редактировать', 'Параметризация', 'Окно', 'Справка']

const AppLogo = () => (
  <svg width="40" height="38" viewBox="0 0 40 38">
    <path d="M4 33L12 4l8-1 7 24-6 3-2-7-7 1-3 8z" fill="#8c1218" />
    <path d="M12 4l8-1 7 24-5 1-2-6-7 1z" fill="#cf2028" />
    <path d="M15 10l3 8-5 1z" fill="#8d8d8d" />
    <path d="M4 33L12 4l3 6-4 14-3 7z" fill="#e8363a" />
    <path d="M6 31l7-4 7-1" stroke="#b81a22" strokeWidth="2" fill="none" />
    <path d="M29 17h7l-3.5 4z" fill="#2c2c2c" />
  </svg>
)

const AppHeader = () => (
  <Header>
    <AppButton aria-label="Меню приложения"><AppLogo /></AppButton>
    <HeaderMain>
      <TitleBar>
        <Toolbar>
          <Grip />
          <Tools names="viewList | top bottom left right front back | isoSW isoSE isoNE isoNW | camera | prevView" />
          <Combo label="Вид" value="" width={139} off />
          <Close />
        </Toolbar>
        <Title>ers\KBA\Desktop\3D тело.dwg</Title>
        <SearchToggle aria-label="Свернуть"><svg width="4" height="7"><path d="M0 0l4 3.5L0 7z" /></svg></SearchToggle>
        <Search aria-label="Поиск" placeholder="Введите ключевое слово/фразу" />
        <InfoTools>
          <Tools names="binoculars arrow key satellite star |" />
          <HelpMark>?</HelpMark>
          <Tools names="arrow" />
        </InfoTools>
        <WindowZone>
          <WindowButton aria-label="Свернуть окно"><svg width="12" height="4"><path d="M1 0h10v3H1z" fill="#fff" /></svg></WindowButton>
          <WindowButton aria-label="Развернуть окно"><svg width="12" height="12" fill="none" stroke="#fff"><path d="M3.5 3V1.5h7v7H9" /><path d="M2 4h6v6H2z" strokeWidth="2" /></svg></WindowButton>
          <WindowButton $grow={2} aria-label="Закрыть окно"><svg width="10" height="9"><path d="M1 1l8 7M9 1L1 8" stroke="#fff" strokeWidth="3" /></svg></WindowButton>
        </WindowZone>
      </TitleBar>
      <MenuBar>
        {menu.map(item => <MenuLink key={item} href="#">{item}</MenuLink>)}
        <DocButtons>
          <DocButton aria-label="Свернуть чертеж"><svg width="12" height="11"><path d="M1 8h10v2H1z" fill="#222" /></svg></DocButton>
          <DocButton aria-label="Восстановить чертеж"><svg width="12" height="11" fill="none" stroke="#222"><path d="M4.5 3V.5h7v6H8M.5 3.5h7v6h-7z" /></svg></DocButton>
          <DocButton aria-label="Закрыть чертеж"><svg width="10" height="11"><path d="M1 2l8 7M9 2L1 9" stroke="#222" strokeWidth="2" /></svg></DocButton>
        </DocButtons>
      </MenuBar>
    </HeaderMain>
  </Header>
)

const ToolbarRows = () => (
  <>
    <Row>
      <Toolbar $gap={2}>
        <Grip $size={11} />
        <Tools names="newFile open save | print preview publish dwf | cut copy paste match blockEdit | undo arrow redo arrowOff | pan zoomRT zoomWin zoomPrev | props design palettes sheets markup calc | help" />
        <EndCap />
      </Toolbar>
      <Toolbar>
        <Grip />
        <Combo label="Цвет" value="Послою" width={149} small><Swatch /></Combo>
        <Divider $wide />
        <Combo label="Тип линий" value="Послою" width={159} small><LineSample $width={60} /></Combo>
        <Divider $wide />
        <Combo label="Вес линий" value="Послою" width={124} small><LineSample $width={35} /></Combo>
        <Divider />
        <Combo label="Стиль печати" value="Поцвету" width={119} lead={6} off />
        <Close />
      </Toolbar>
    </Row>
    <Row>
      <Toolbar $gap={2}>
        <Grip />
        <Combo label="Рабочее пространство" value="Model_3D" width={174} />
        <Tools names="gear workspaceSave" />
        <Close />
      </Toolbar>
      <Toolbar>
        <Grip />
        <Tools names="layerProps" />
        <Combo label="Слой" value="0" width={299} lead={1}>
          <Icon name="bulb" /><Icon name="sun" /><Icon name="vpFreeze" /><Icon name="unlock" /><Swatch />
        </Combo>
        <Tools names="layerCurrent layerPrev layerState" />
        <Close />
      </Toolbar>
      <Toolbar $gap={1}>
        <Grip />
        <Tools names="ucs | ucsWorld ucsPrev | ucsFace ucsObject ucsView | ucsOrigin ucsZ ucs3 | rotX rotY rotZ | ucsApply" />
        <Close />
      </Toolbar>
      <Toolbar>
        <Grip />
        <Tools names="ucs ucsNamed |" />
        <Combo label="ПСК" value="Мировая СК" width={175} lead={5} small><Icon name="globe" /></Combo>
        <Close />
      </Toolbar>
      <RowTail />
    </Row>
    <Row>
      <Toolbar $gap={1}>
        <Grip />
        <Tools names="polysolid boxSolid wedge cone sphere cylinder torus pyramid helix planar | extrude presspull sweep revolve loft | union subtract intersect | gizmo3d gizmoRot alignUcs array3d" />
        <Close />
      </Toolbar>
      <Toolbar $gap={2}>
        <Grip />
        <Tools names="wire2d | wire3d hidden realistic conceptual | styleManager" />
        <Close />
      </Toolbar>
      <Toolbar $gap={1}>
        <Grip />
        <Tools names="pan zoom orbitMenu cameraMove walk |" />
        <Combo label="Именованные виды" value="" width={140} />
        <Close />
      </Toolbar>
      <Toolbar>
        <Grip />
        <Tools names="attach | dwg xclip underlay snapLay | picAttach picClip picAdjust picQuality picTransp picFrame" />
        <Close />
      </Toolbar>
    </Row>
  </>
)

/* ---------- docks ---------- */

const Dock = styled.aside`
  flex: none;
  padding: ${props => props.$right ? '1px 3px 0 5px' : '4px 5px 0 0'};
`
const DockBar = styled.div`
  display: flex;
  flex-direction: column;
  width: 25px;
  margin-bottom: ${props => props.$gap || 0}px;
  border: 1px solid #333;
  background: #ebebeb;
`
const DockGrip = styled.span`
  height: 8px;
  background: #5f5f5f;
  padding: 1px 3px;
  &::after {
    content: '';
    display: block;
    width: 14px;
    height: 6px;
    ${dotPattern}
  }
`
const DockButton = styled(ToolButton)`
  margin-bottom: 1px;
`
const DockDivider = styled.span`
  height: 2px;
  margin: 2px;
  background: #a5a5a5;
`
const DockTools = ({ names, gap }) => (
  <DockBar $gap={gap}>
    <DockGrip />
    {names.split(' ').map((name, i) => name === '|'
      ? <DockDivider key={i} />
      : <DockButton key={i} aria-label={name}><Icon name={name} /></DockButton>)}
  </DockBar>
)

/* ---------- drawing area ---------- */

const Workspace = styled.main`
  display: flex;
  flex: 1;
  min-height: 0;
  background: #696969;
`
const Drawing = styled.section`
  flex: 1;
  min-width: 0;
  display: flex;
  flex-direction: column;
  margin-bottom: 4px;
  border-left: 1px solid #b4b4b4;
  border-right: 1px solid #e0e0e0;
  border-bottom: 1px solid #fff;
  background: #fff;
`
const Canvas = styled.div`
  position: relative;
  flex: 1;
  overflow: hidden;
`
const Crosshair = styled.svg`
  position: absolute;
  left: 544px;
  top: 327px;
`
const UcsMark = styled.svg`
  position: absolute;
  left: 12px;
  bottom: 10px;
`
const ViewCube = styled.div`
  position: absolute;
  top: -20px;
  right: 14px;
  width: 136px;
`
const NavBar = styled.div`
  position: absolute;
  top: 169px;
  right: 1px;
  width: 36px;
  height: 216px;
  border: 2px solid #c4c4c4;
  border-radius: 6px;
  background: #f7f7f7;
`
const compass = '\'Liberation Sans\', Arial, sans-serif'

const CanvasArea = () => (
  <Canvas>
    <Crosshair width="65" height="66" stroke="#000" fill="none">
      <path d="M32.5 1v64M0 32.5h64" />
      <rect x="29.5" y="29.5" width="6" height="6" />
    </Crosshair>
    <UcsMark width="90" height="80" stroke="#000" fill="none">
      <path d="M7.5 21v49.5H57" />
      <rect x="3.5" y="65.5" width="9" height="9" />
      <path d="M9 3l6 6 6-6M15 9v7M62 56l12 12M74 56L62 68" />
    </UcsMark>
    <ViewCube>
      <svg width="136" height="174" viewBox="0 0 136 174">
        <circle cx="68" cy="61" r="54" fill="none" stroke="#fbfbfb" strokeWidth="14" />
        <rect x="42.5" y="35.5" width="51" height="51" fill="#eee" stroke="#a3a3a3" />
        <rect x="52" y="45" width="32" height="32" fill="#e1e3e9" />
        <text x="68" y="66" textAnchor="middle" fontFamily="Roboto, sans-serif" fontSize="13" fill="#7f838b">Верх</text>
        <g fontFamily={compass} fontSize="22" fill="#eee" stroke="#a8a8a8">
          <text x="4" y="69">З</text>
          <text x="117" y="69">В</text>
          <text x="57" y="126">Ю</text>
        </g>
        <rect x="45" y="149" width="46" height="16" rx="4" fill="#ebebf3" />
        <text x="48" y="160" fontFamily={compass} fontSize="11" fill="#8c8c94">МСК</text>
        <path d="M77.5 154.5h9l-4.5 5z" fill="none" stroke="#b9bcc8" />
      </svg>
    </ViewCube>
    <NavBar>
      <svg width="32" height="212" fill="none" stroke="#d6d6d6">
        <circle cx="25.5" cy="5" r="4" fill="#e2e2e2" />
        <path d="M23 3l5 4M28 3l-5 4" stroke="#fff" />
        <path d="M16 19.5h10v11a10.5 10.5 0 1 1-10-11z" />
        <circle cx="16" cy="30" r="6" />
        <path d="M13 50h6l-3 3zM13 120h6l-3 3zM13 158h6l-3 3z" fill="#d0d0d0" stroke="none" />
        <path d="M3 56.5h26M3 166.5h26" stroke="#d0d0d0" />
        <path transform="translate(4 60) scale(1.4)" d={hand} />
        <path d="M5 90l14 14M19 90L5 104M5 94v-4h4M15 90h4v4M5 100v4h4" />
        <circle cx="20" cy="104" r="5.5" fill="#f7f7f7" />
        <path d="M24 108l5 4" strokeWidth="3" />
        <path d="M16 128l4 5h-2v15h-4v-15h-2zM13 135c-12 2-12 7 0 8M19 135c13 2 13 8-6 8l3-3" />
        <path d="M4.5 169.5h6v6h-6zM12.5 169.5h6v6h-6zM20.5 169.5h6v6h-6zM4.5 179.5h16v13h-16z" />
        <path d="M10 182l6 4-6 4z" fill="#cfcfcf" />
        <circle cx="25.5" cy="205" r="4" />
        <path d="M23 204.5h5" />
      </svg>
    </NavBar>
  </Canvas>
)

const Tabs = styled.div`
  display: flex;
  height: 17px;
  border-top: 1px solid #555;
  background: #efefef;
`
const TabArrow = styled.button`
  width: 15px;
  padding: 0;
  border: 0;
  border-right: 1px solid #9a9a9a;
  background: #efefef;
`
const Tab = styled.button`
  display: flex;
  align-items: center;
  padding: 0 0 0 ${props => props.$active ? 5 : 3}px;
  border: 0;
  background: ${props => props.$active ? '#fff' : '#efefef'};
  font-size: 11px;
`
const tabArrows = ['M3 0v8M10 0v8L4 4z', 'M9 0v8L4 4z', 'M4 0v8l5-4z', 'M4 0v8l6-4zM11 0v8']

const LayoutTabs = () => (
  <Tabs>
    {tabArrows.map(d => (
      <TabArrow key={d} aria-label="Прокрутка вкладок">
        <svg width="12" height="8"><path d={d} fill="#666" stroke="#666" /></svg>
      </TabArrow>
    ))}
    <svg width="7" height="16"><path d="M0 0h7v16H5z" fill="#fff" /><path d="M0 0l5 16" stroke="#555" /></svg>
    {['Модель', 'Лист1', 'Лист2'].map((name, i) => (
      <Tab key={name} $active={i === 0}>
        {name}
        <svg width="14" height="16"><path d="M14 0H13L8 16h6z" fill="#efefef" /><path d="M13 0L8 16" stroke="#555" /></svg>
      </Tab>
    ))}
  </Tabs>
)

/* ---------- command line ---------- */

const Command = styled.section`
  display: flex;
  flex: none;
  height: 67px;
  background: #fff;
  font: 13px/16px 'Liberation Mono', 'Courier New', monospace;
`
const CommandGrip = styled.div`
  width: 16px;
  padding: 3px 1px;
  border-radius: 4px 0 0 0;
  background: #9c9c9c;
  border-right: 1px solid #e6e6e6;
  &::after {
    content: '';
    display: block;
    width: 12px;
    height: 6px;
    ${dotPattern}
  }
`
const CommandMain = styled.div`
  flex: 1;
  display: flex;
  flex-direction: column;
`
const History = styled.div`
  display: flex;
  justify-content: space-between;
  height: 49px;
  border-bottom: 1px solid #9a9a9a;
`
const Lines = styled.pre`
  margin: 0;
  padding: 1px 0 0 1px;
  font: inherit;
`
const Prompt = styled.div`
  display: flex;
  height: 18px;
  padding-left: 1px;
`
const PromptLabel = styled.label`
  padding-top: 2px;
`
const PromptInput = styled.input`
  flex: 1;
  height: 16px;
  border: 0;
  outline: 0;
`
const ScrollV = styled.div`
  display: flex;
  flex-direction: column;
  justify-content: space-between;
  align-items: center;
  width: 16px;
  padding: 7px 0;
  background: #f0f0f0;
`
const ScrollH = styled.div`
  display: flex;
  justify-content: space-between;
  align-items: center;
  width: 66px;
  height: 17px;
  margin-right: 18px;
  padding: 0 6px;
  background: #f0f0f0;
`
const Thumb = styled.span`
  width: 15px;
  height: 15px;
  margin-right: 16px;
  border: 1px solid #979797;
  border-radius: 2px;
  background: linear-gradient(#f5f5f5 50%, #dcdcdc 50%);
`

const CommandLine = () => (
  <Command>
    <CommandGrip />
    <CommandMain>
      <History>
        <Lines>{'Команда:\nКоманда:  <Сетка откл>\nКоманда: Противоположный угол:'}</Lines>
        <ScrollV>
          <svg width="7" height="4"><path d="M0 4h7L3.5 0z" fill="#444" /></svg>
          <svg width="7" height="4"><path d="M0 0h7L3.5 4z" fill="#444" /></svg>
        </ScrollV>
      </History>
      <Prompt>
        <PromptLabel htmlFor="prompt">Команда:</PromptLabel>
        <PromptInput id="prompt" />
        <ScrollH>
          <svg width="4" height="7"><path d="M4 0v7L0 3.5z" fill="#333" /></svg>
          <Thumb />
          <svg width="4" height="7"><path d="M0 0v7l4-3.5z" fill="#333" /></svg>
        </ScrollH>
      </Prompt>
    </CommandMain>
  </Command>
)

/* ---------- status bar ---------- */

const Status = styled.footer`
  display: flex;
  flex: none;
  height: 18px;
  border-top: 1px solid #111;
  overflow: hidden;
  background: linear-gradient(#909090, #7b7b7b);
`
const Coords = styled.output`
  width: 197px;
  padding: 4px 0 0 12px;
  border-right: 1px solid #333;
  font-size: 11px;
  line-height: 14px;
`
const StatusButton = styled.button`
  flex: none;
  display: flex;
  align-items: flex-start;
  justify-content: center;
  gap: 3px;
  width: ${props => props.$width || 22}px;
  height: 22px;
  margin-right: ${props => props.$gap || 0}px;
  padding: ${props => props.$text ? 3 : 2}px 0 0;
  border: 0;
  border-right: 1px solid #444;
  background: ${props => props.$on ? 'linear-gradient(#d8eef5, #8cc3d3)' : 'linear-gradient(#c9c9c9, #a2a2a2)'};
  ${props => props.$pressed && 'background: #9a9a9a; box-shadow: inset 1px 1px 2px #222;'}
`
const Spacer = styled.span`
  flex: 1;
  border-right: 1px solid #333;
`

const modes = [
  ['stSnap'], ['stGridDots'], ['stGrid'], ['stOrtho'], ['stPolar', true], ['stOsnap', true], ['stOsnap3d'],
  ['stTrack', true], ['stDucs', true], ['stDyn', true], ['stLwt'], ['stTransp', true], ['stQuick'], ['stSelect'],
]

const StatusBar = () => (
  <Status>
    <Coords>2511.5389, 1787.1323, 0.0000</Coords>
    {modes.map(([name, on]) => (
      <StatusButton key={name} $on={on} aria-label={name}><Icon name={name} /></StatusButton>
    ))}
    <Spacer />
    <StatusButton $width={54} $text>МОДЕЛЬ</StatusButton>
    <StatusButton aria-label="stModel"><Icon name="stModel" /></StatusButton>
    <StatusButton $gap={12} aria-label="stLayouts"><Icon name="stLayouts" /></StatusButton>
    <StatusButton $width={51} $text><Icon name="stAnno" /><span>1:1</span><svg width="7" height="12"><path d="M0 5h7L3.5 9z" /></svg></StatusButton>
    <StatusButton aria-label="stAnnoVis"><Icon name="stAnnoVis" /></StatusButton>
    <StatusButton $gap={6} aria-label="stAnnoAuto"><Icon name="stAnnoAuto" /></StatusButton>
    <StatusButton aria-label="gear"><Icon name="gear" /></StatusButton>
    <StatusButton aria-label="stLock"><Icon name="stLock" /></StatusButton>
    <StatusButton $width={23} aria-label="stHard"><Icon name="stHard" /></StatusButton>
    <StatusButton $width={26} $pressed aria-label="bulb"><Icon name="bulb" /></StatusButton>
    <StatusButton $width={16} aria-label="arrow"><svg width="6" height="14"><path d="M0 9h6l-3 4z" /></svg></StatusButton>
    <StatusButton $width={23} aria-label="stClean"><Icon name="stClean" /></StatusButton>
  </Status>
)

const Shell = styled.div`
  display: flex;
  flex-direction: column;
  height: 100vh;
  padding-right: 4px;
  overflow: hidden;
`

const App = () => (
  <Shell>
    <GlobalStyle />
    <AppHeader />
    <ToolbarRows />
    <Workspace>
      <Dock>
        <DockTools names="line xline pline polygon rect arc circle cloud spline ellipse ellArc insert block point hatch gradient region table text addSel" />
        <DockTools names="orbit freeOrbit contOrbit" />
      </Dock>
      <Drawing>
        <CanvasArea />
        <LayoutTabs />
      </Drawing>
      <Dock $right>
        <DockTools gap={3} names="erase copyObj mirror offset array move rotate scale stretch trim extend breakPt breakTwo join chamfer fillet explode" />
        <DockTools names="measure areaCalc | list locate" />
      </Dock>
    </Workspace>
    <CommandLine />
    <StatusBar />
  </Shell>
)

export default App
